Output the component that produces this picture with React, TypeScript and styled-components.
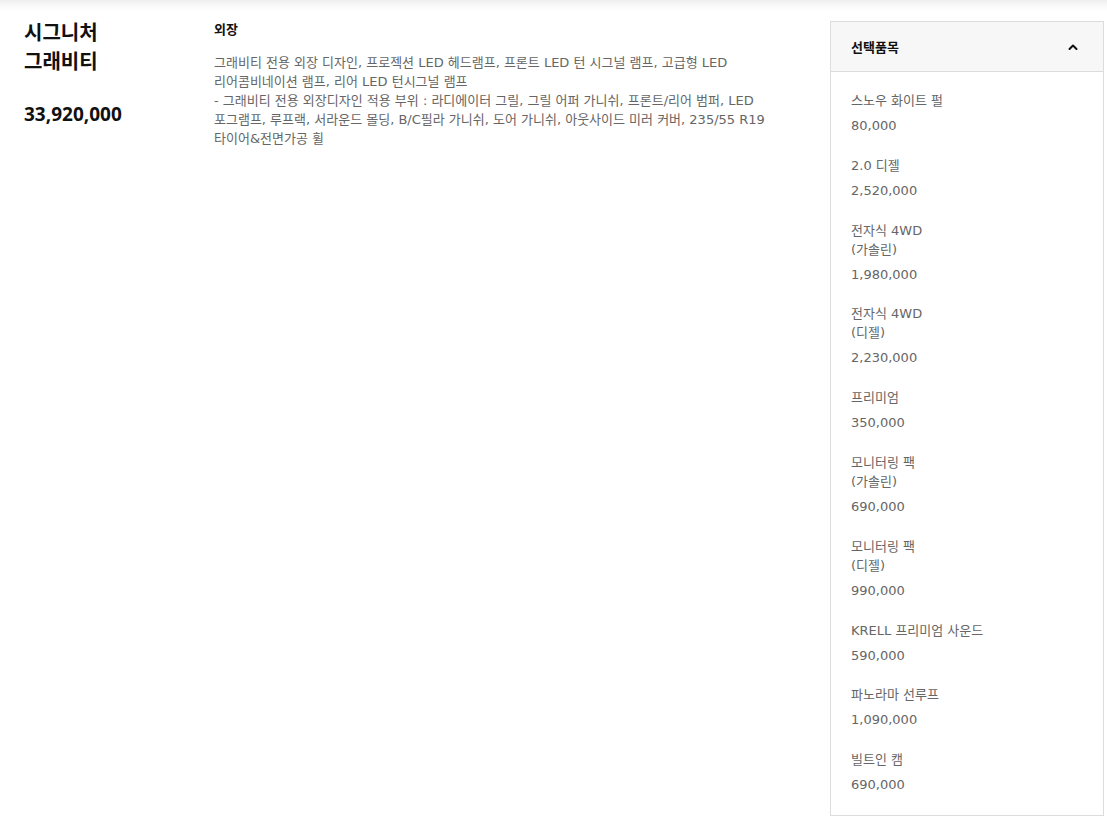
import React from "react";
import styled, { createGlobalStyle } from "styled-components";

const Global = createGlobalStyle`
  html, body { margin: 0; padding: 0; background: #fff; }
  body { font-family: "DejaVu Sans", "Noto Sans CJK KR", sans-serif; color: #111; }
  * { box-sizing: border-box; }
`;

const Shade = styled.div`
  height: 12px;
  background: linear-gradient(to bottom, #eeeeee 0%, #f8f8f8 40%, #ffffff 100%);
`;

const Layout = styled.div`
  display: grid;
  grid-template-columns: 150px 1fr 274px;
  column-gap: 40px;
  padding: 9px 3px 14px 24px;
  align-items: start;
`;

const Summary = styled.div`
  display: flex;
  flex-direction: column;
`;

const Title = styled.h2`
  margin: -2px 0 0;
  font-size: 20px;
  line-height: 29px;
  font-weight: 700;
  color: #111;
`;

const TotalPrice = styled.div`
  margin-top: 25px;
  font-family: "Noto Sans", "Noto Sans CJK KR", sans-serif;
  font-size: 19px;
  line-height: 25px;
  font-weight: 700;
  color: #111;
`;

const Detail = styled.div`
  display: flex;
  flex-direction: column;
  max-width: 570px;
`;

const SectionTitle = styled.h3`
  margin: -1.5px 0 0;
  font-size: 13px;
  line-height: 19px;
  font-weight: 700;
  color: #111;
`;

const Description = styled.p`
  margin: 14px 0 0;
  font-size: 13px;
  line-height: 19px;
  color: #666;
  white-space: pre-line;
  word-break: keep-all;
`;

const Panel = styled.aside`
  border: 1px solid #dcdcdc;
  background: #fff;
`;

const PanelHeader = styled.div`
  display: flex;
  align-items: center;
  justify-content: space-between;
  height: 50px;
  padding: 0 25px 0 20px;
  background: #f7f7f7;
  border-bottom: 1px solid #dcdcdc;
  font-size: 13px;
  font-weight: 700;
  color: #111;
`;

const Chevron = styled.svg`
  width: 12px;
  height: 12px;
  display: block;
  margin-right: -1px;
`;

const ItemList = styled.ul`
  list-style: none;
  margin: 0;
  padding: 19px 20px 0;
`;

const Item = styled.li`
  margin-bottom: 20.8px;
  font-size: 13px;
  color: #666;
`;

const ItemName = styled.div`
  line-height: 19px;
  white-space: pre-line;
  word-break: keep-all;
`;

const ItemPrice = styled.div`
  margin-top: 6px;
  line-height: 19px;
`;

const items = [
  { name: "스노우 화이트 펄", price: "80,000" },
  { name: "2.0 디젤", price: "2,520,000" },
  { name: "전자식 4WD\n(가솔린)", price: "1,980,000" },
  { name: "전자식 4WD\n(디젤)", price: "2,230,000" },
  { name: "프리미엄", price: "350,000" },
  { name: "모니터링 팩\n(가솔린)", price: "690,000" },
  { name: "모니터링 팩\n(디젤)", price: "990,000" },
  { name: "KRELL 프리미엄 사운드", price: "590,000" },
  { name: "파노라마 선루프", price: "1,090,000" },
  { name: "빌트인 캠", price: "690,000" },
];

const description =
  "그래비티 전용 외장 디자인, 프로젝션 LED 헤드램프, 프론트 LED 턴 시그널 램프, 고급형 LED 리어콤비네이션 램프, 리어 LED 턴시그널 램프\n- 그래비티 전용 외장디자인 적용 부위 : 라디에이터 그릴, 그릴 어퍼 가니쉬, 프론트/리어 범퍼, LED 포그램프, 루프랙, 서라운드 몰딩, B/C필라 가니쉬, 도어 가니쉬, 아웃사이드 미러 커버, 235/55 R19 타이어&전면가공 휠";

export default function App() {
  return (
    <>
      <Global />
      <Shade />
      <Layout>
        <Summary>
          <Title>
            시그니처
            <br />
            그래비티
          </Title>
          <TotalPrice>33,920,000</TotalPrice>
        </Summary>
        <Detail>
          <SectionTitle>외장</SectionTitle>
          <Description>{description}</Description>
        </Detail>
        <Panel>
          <PanelHeader>
            <span>선택품목</span>
            <Chevron viewBox="0 0 12 12" fill="none">
              <path d="M2.5 8 L6 4.5 L9.5 8" stroke="#111" strokeWidth="2" strokeLinecap="round" strokeLinejoin="round" />
            </Chevron>
          </PanelHeader>
          <ItemList>
            {items.map((it) => (
              <Item key={it.name}>
                <ItemName>{it.name}</ItemName>
                <ItemPrice>{it.price}</ItemPrice>
              </Item>
            ))}
          </ItemList>
        </Panel>
      </Layout>
    </>
  );
}
